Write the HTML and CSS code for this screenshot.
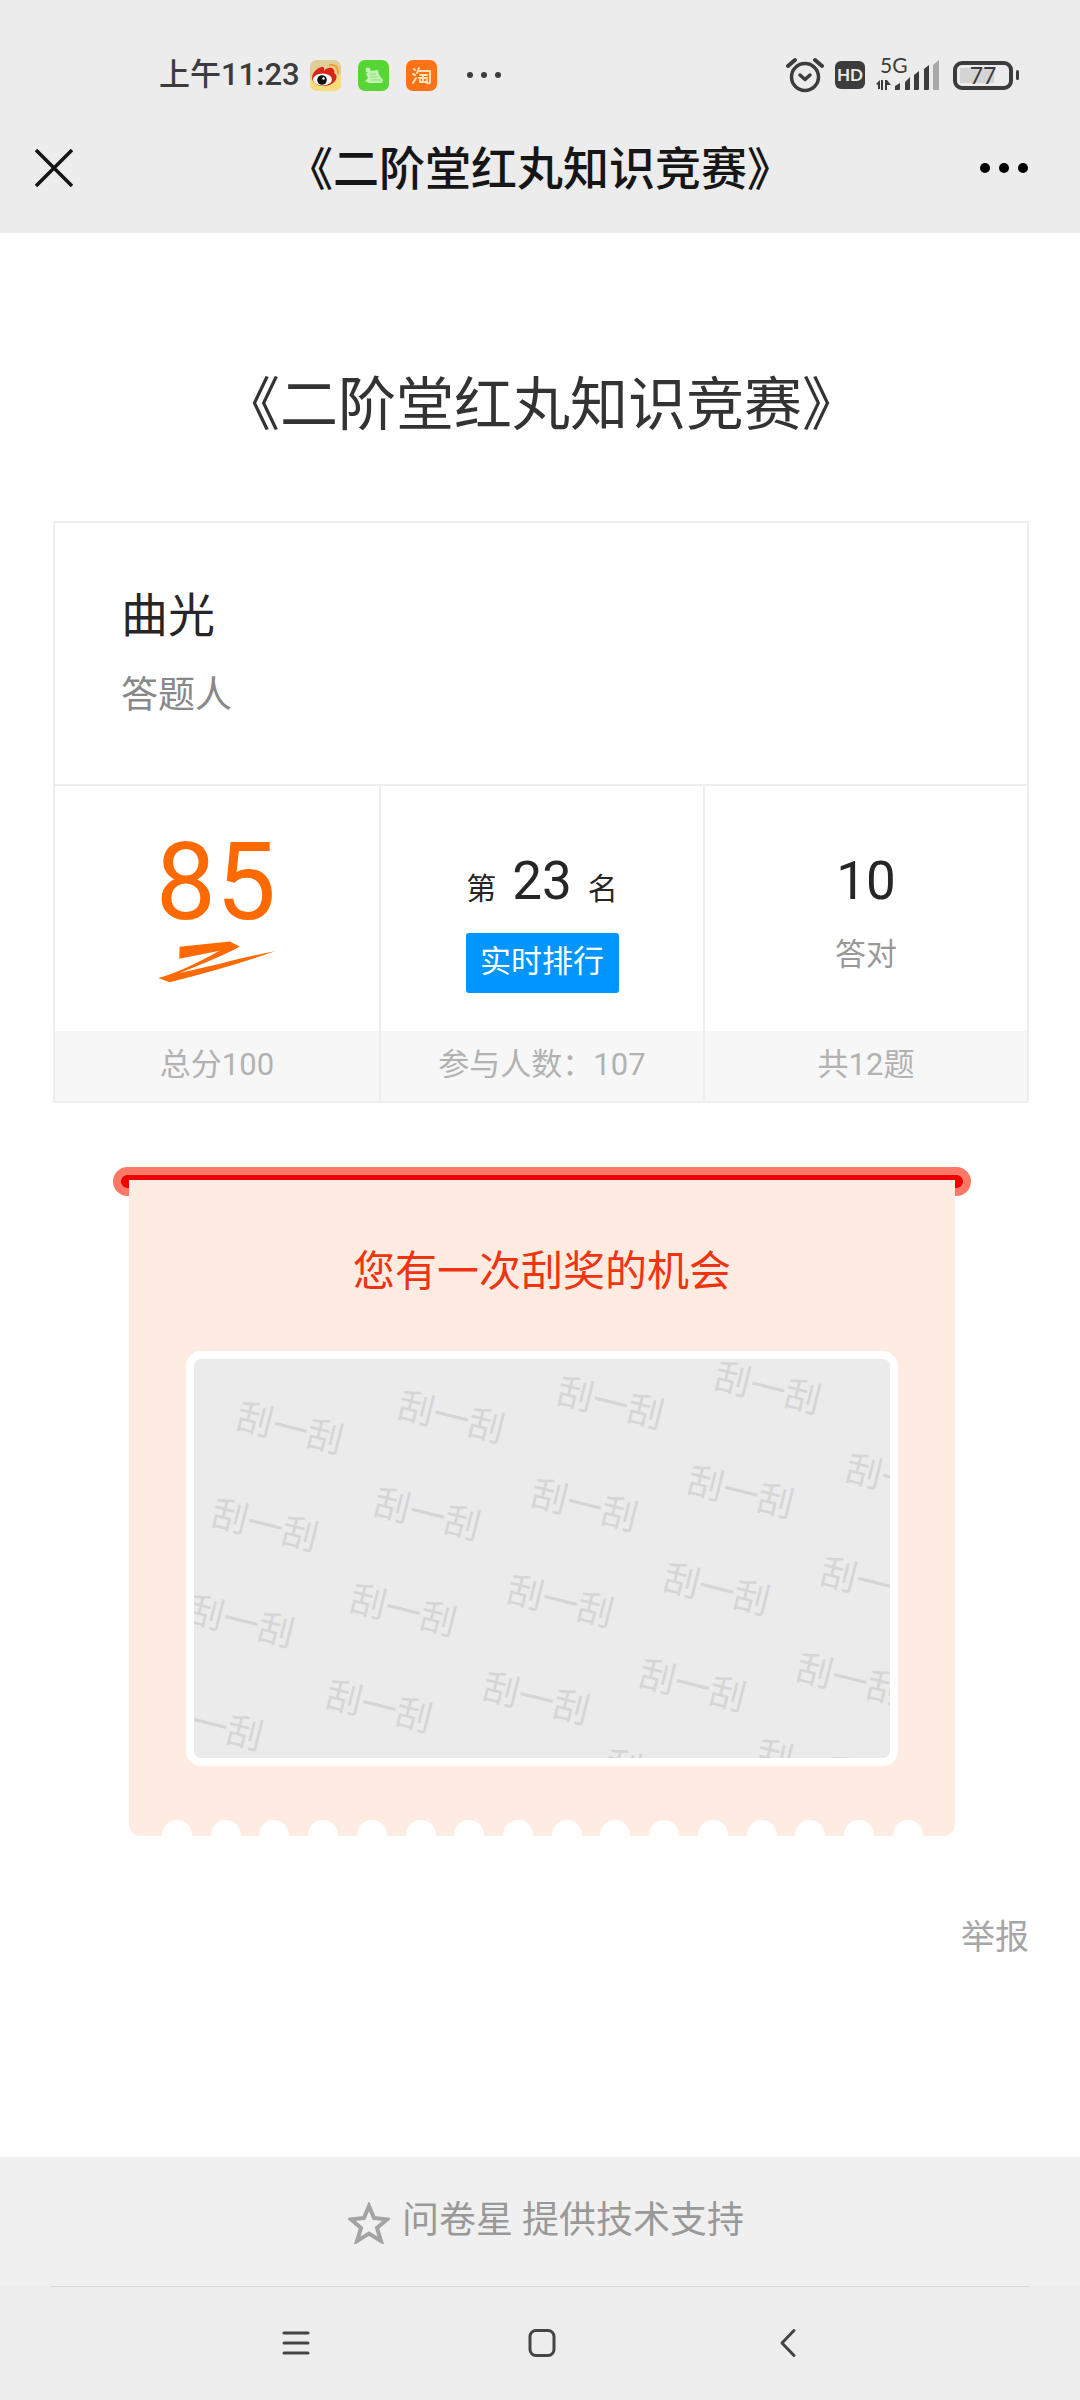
FILE: index.html
```html
<!DOCTYPE html>
<html lang="zh-CN">
<head>
<meta charset="utf-8">
<meta name="viewport" content="width=device-width, initial-scale=1">
<title>《二阶堂红丸知识竞赛》</title>
<link rel="stylesheet" href="styles.css">
</head>
<body>
<header class="top">
  <div class="status">
    <span class="clock">上午11:23</span>
    <div class="apps">
      <svg class="app" viewBox="0 0 31 31" aria-hidden="true">
        <rect width="31" height="31" rx="7" fill="#dfcf96"/>
        <path d="M0 18 Q10 31 31 14 V24 a7 7 0 0 1 -7 7 H7 a7 7 0 0 1 -7 -7z" fill="#f9dc7c"/>
        <path d="M20 5 q8 -1 8 8 M20 9 q4 0 4 4" fill="none" stroke="#f0a030" stroke-width="2" stroke-linecap="round"/>
        <path d="M2 18 C2 12 9 6 13 7 C15 8 14 10 14 11 C18 6 25 7 24 13 C28 15 27 20 23 23 C17 28 3 27 2 18z" fill="#dc2318"/>
        <ellipse cx="12.500" cy="19.500" rx="9.500" ry="6" fill="#fff"/>
        <circle cx="12" cy="20" r="4.800" fill="#111"/>
        <circle cx="13.500" cy="18.500" r="1.200" fill="#fff"/>
      </svg>
      <svg class="app" viewBox="0 0 31 31" aria-hidden="true">
        <rect width="31" height="31" rx="7" fill="#57d534"/>
        <circle cx="10" cy="10" r="2.500" fill="#c9f5b8"/>
        <path d="M8 14 L12 11 L20 10 L21 15 L25 20 L24 23 L11 23 L7 21 L10 18z" fill="#c4f2b4"/>
        <path d="M12 14 h6 M12 17 h8 M13 20 h10" stroke="#8de272" stroke-width="1"/>
      </svg>
      <svg class="app" viewBox="0 0 31 31" aria-hidden="true">
        <rect width="31" height="31" rx="7" fill="#fd7117"/>
        <g fill="none" stroke="#ffe0b8" stroke-width="2" stroke-linecap="round" stroke-linejoin="round">
          <path d="M8 9 l1 1 M7 14 l2 1 M7 23 l3 -5 M13 8 l-2 5 M13 11 h11 v11 q0 2 -3 1 M14 15 h7 M13 18 h8 M17 15 v7 M14 20 v2 h7 v-2"/>
        </g>
      </svg>
    </div>
    <svg class="more-apps" viewBox="0 0 36 8" aria-hidden="true"><g fill="#3c3c3c"><circle cx="4" cy="4" r="3"/><circle cx="18" cy="4" r="3"/><circle cx="32" cy="4" r="3"/></g></svg>
    <div class="signals">
      <svg class="alarm" viewBox="0 0 38 36" aria-hidden="true">
        <g fill="none" stroke="#3c3c3c" stroke-linecap="round" stroke-linejoin="round">
          <circle cx="19" cy="20" r="13.500" stroke-width="3.500"/>
          <path d="M2 9 L9 3 M36 9 L29 3" stroke-width="4"/>
          <path d="M14 18 L19 22.500 L24 18" stroke-width="3.500"/>
        </g>
      </svg>
      <span class="hd">HD</span>
      <div class="cell-signal">
        <span class="gen">5G</span>
        <svg class="bars" viewBox="0 0 64 34" aria-hidden="true">
          <g fill="#3c3c3c">
            <path d="M0 26 L4 22 V31 H2 V27z M5 22 H7 V32 H5z M9 22 H11 V32 H9z M11 22 L15 27 H11z"/>
            <path d="M19 28 L24 25 V31 q0 1 -1 1 H19z M29 24 L34 19 V31 q0 1 -1 1 H29z M38 17 L43 13 V31 q0 1 -1 1 H38z M48 11 L53 7 V31 q0 1 -1 1 H48z"/>
          </g>
          <path d="M57 7 L63 2 V31 q0 1 -1 1 H58 q-1 0 -1 -1z" fill="#a9a9a9"/>
        </svg>
      </div>
      <div class="battery"><span class="level">77</span></div>
    </div>
  </div>
  <div class="titlebar">
    <button class="icon-button" type="button" aria-label="关闭">
      <svg class="close" viewBox="0 0 38 38" aria-hidden="true"><path d="M1 1 L37 37 M37 1 L1 37" stroke="#141414" stroke-width="3.500" fill="none"/></svg>
    </button>
    <span class="bar-title">《二阶堂红丸知识竞赛》</span>
    <button class="icon-button more" type="button" aria-label="更多">
      <svg class="dots" viewBox="0 0 48 10" aria-hidden="true"><circle cx="5" cy="5" r="5"/><circle cx="24" cy="5" r="5"/><circle cx="43" cy="5" r="5"/></svg>
    </button>
  </div>
</header>

<main class="content">
  <h1 class="title">《二阶堂红丸知识竞赛》</h1>

  <section class="result">
    <div class="person">
      <span class="name">曲光</span>
      <span class="role">答题人</span>
    </div>
    <div class="stats">
      <div class="stat">
        <div class="stat-body stat-score">
          <span class="score">85</span>
          <svg class="swoosh" viewBox="350 482 352 126" aria-hidden="true">
            <path d="M415 499 L566 483 L596 498 Q560 520 415 578 L530 552 Q610 530 702 513 Q560 562 385 606 L351 593 Q420 575 535 511 L414 535z" fill="#ff6a00"/>
          </svg>
        </div>
        <span class="stat-foot">总分100</span>
      </div>
      <div class="stat">
        <div class="stat-body">
          <div class="rank"><span class="rank-unit">第</span><span class="number">23</span><span class="rank-unit">名</span></div>
          <a class="rank-link" href="#rank">实时排行</a>
        </div>
        <span class="stat-foot">参与人数：107</span>
      </div>
      <div class="stat">
        <div class="stat-body">
          <span class="number">10</span>
          <span class="caption">答对</span>
        </div>
        <span class="stat-foot">共12题</span>
      </div>
    </div>
  </section>

  <section class="ticket">
    <div class="slot"></div>
    <div class="paper">
      <h2 class="chance">您有一次刮奖的机会</h2>
      <svg class="scratch" viewBox="0 0 695 398" preserveAspectRatio="xMinYMin slice" role="img" aria-label="刮一刮">
        <g class="mark">
          <text transform="translate(96 69) rotate(14)" y="13">刮一刮</text>
          <text transform="translate(257 58) rotate(14)" y="13">刮一刮</text>
          <text transform="translate(416 44) rotate(14)" y="13">刮一刮</text>
          <text transform="translate(573 29) rotate(14)" y="13">刮一刮</text>
          <text transform="translate(71 166) rotate(14)" y="13">刮一刮</text>
          <text transform="translate(233 155) rotate(14)" y="13">刮一刮</text>
          <text transform="translate(390 146) rotate(14)" y="13">刮一刮</text>
          <text transform="translate(546 133) rotate(14)" y="13">刮一刮</text>
          <text transform="translate(704 121) rotate(14)" y="13">刮一刮</text>
          <text transform="translate(47 262) rotate(14)" y="13">刮一刮</text>
          <text transform="translate(209 251) rotate(14)" y="13">刮一刮</text>
          <text transform="translate(366 242) rotate(14)" y="13">刮一刮</text>
          <text transform="translate(522 230) rotate(14)" y="13">刮一刮</text>
          <text transform="translate(679 224) rotate(14)" y="13">刮一刮</text>
          <text transform="translate(16 365) rotate(14)" y="13">刮一刮</text>
          <text transform="translate(185 347) rotate(14)" y="13">刮一刮</text>
          <text transform="translate(342 339) rotate(14)" y="13">刮一刮</text>
          <text transform="translate(498 326) rotate(14)" y="13">刮一刮</text>
          <text transform="translate(655 320) rotate(14)" y="13">刮一刮</text>
          <text transform="translate(464 416) rotate(14)" y="13">刮一刮</text>
          <text transform="translate(615 406) rotate(14)" y="13">刮一刮</text>
        </g>
      </svg>
      <div class="teeth">
        <i></i><i></i><i></i><i></i><i></i><i></i><i></i><i></i><i></i><i></i><i></i><i></i><i></i><i></i><i></i><i></i>
      </div>
    </div>
  </section>

  <a class="report" href="#report">举报</a>
</main>

<footer class="bottom">
  <div class="support">
    <svg class="star" viewBox="0 0 42 42" aria-hidden="true"><path d="M21 4 L26 16 L39 17.500 L29 26 L33 39 L21 31.500 L9 39 L13 26 L3 17.500 L16 16z" fill="none" stroke="#a3a3a3" stroke-width="4" stroke-linejoin="miter"/></svg>
    <span>问卷星 提供技术支持</span>
  </div>
  <nav class="system">
    <button class="icon-button" type="button" aria-label="菜单">
      <svg class="key" viewBox="0 0 30 30" aria-hidden="true"><path d="M3 5 H27 M3 15 H27 M3 25 H27" stroke="#444" stroke-width="3" stroke-linecap="round"/></svg>
    </button>
    <button class="icon-button" type="button" aria-label="主页">
      <svg class="key" viewBox="0 0 30 30" aria-hidden="true"><rect x="3" y="2.500" width="24" height="25" rx="6" fill="none" stroke="#444" stroke-width="3"/></svg>
    </button>
    <button class="icon-button" type="button" aria-label="返回">
      <svg class="key" viewBox="0 0 30 30" aria-hidden="true"><path d="M22 2.500 L10 15 L22 27.500" fill="none" stroke="#444" stroke-width="3" stroke-linecap="round" stroke-linejoin="round"/></svg>
    </button>
  </nav>
</footer>
</body>
</html>
```
FILE: styles.css
```css
* {
  box-sizing: border-box;
}

body {
  margin: 0;
  min-height: 100vh;
  display: flex;
  flex-direction: column;
  background: #fff;
  color: #262626;
  font-family: Roboto, "Noto Sans CJK SC", sans-serif;
}

svg {
  display: block;
}

.icon-button {
  padding: 0;
  border: 0;
  background: none;
}

/* Phone status bar and title bar */
.top {
  background: #ececec;
}

.status {
  display: flex;
  align-items: center;
  height: 102px;
  padding: 48px 61px 0 159px;
}

.clock {
  width: 151px;
  color: #3c3c3c;
  font-size: 31px;
  font-weight: 500;
  line-height: 54px;
  white-space: nowrap;
}

.apps {
  display: flex;
  gap: 17px;
}

.app {
  width: 31px;
  height: 31px;
}

.more-apps {
  width: 36px;
  height: 8px;
  margin-left: 29px;
}

.signals {
  display: flex;
  align-items: center;
  gap: 11px;
  margin-left: auto;
}

.alarm {
  width: 38px;
  height: 36px;
}

.hd {
  width: 30px;
  border-radius: 6px;
  background: #3c3c3c;
  color: #ececec;
  font: 700 17px/28px Lato, sans-serif;
  text-align: center;
}

.cell-signal {
  display: grid;
  width: 64px;
  height: 34px;
}

.gen,
.bars {
  grid-area: 1 / 1;
}

.gen {
  padding-left: 4px;
  color: #3c3c3c;
  font: 21px/14px Lato, sans-serif;
}

.battery {
  display: flex;
  align-items: center;
  margin-left: 2px;
}

.level {
  width: 60px;
  border: 4px solid #3c3c3c;
  border-radius: 9px;
  background: linear-gradient(#d4d4d4, #d4d4d4) 3px center / 34px 15px no-repeat;
  color: #3c3c3c;
  font: 23px/21px Lato, sans-serif;
  text-align: center;
}

.battery::after {
  content: "";
  width: 3px;
  height: 10px;
  margin-left: 3px;
  border-radius: 2px;
  background: #3c3c3c;
}

.titlebar {
  display: grid;
  grid-template-columns: 1fr auto 1fr;
  align-items: center;
  height: 131px;
  padding: 0 35px;
}

.titlebar .icon-button {
  justify-self: start;
}

.titlebar .more {
  justify-self: end;
  margin-right: 17px;
}

.close {
  width: 38px;
  height: 38px;
}

.dots {
  width: 48px;
  height: 10px;
}

.bar-title {
  padding-top: 2px;
  color: #161616;
  font-size: 46px;
  font-weight: 500;
  line-height: 60px;
}

/* Result page */
.content {
  flex: 1;
  display: flex;
  flex-direction: column;
  padding: 132px 51px 60px 53px;
}

.title {
  margin: 0 0 76px;
  color: #333;
  font-size: 58px;
  font-weight: 400;
  line-height: 80px;
  text-align: center;
}

.result {
  border: 2px solid #eee;
}

.person {
  display: flex;
  flex-direction: column;
  gap: 24px;
  padding: 61px 66px 64px;
}

.name {
  font-size: 47px;
  line-height: 64px;
}

.role {
  color: #888;
  font-size: 37px;
  line-height: 48px;
}

.stats {
  display: grid;
  grid-template-columns: repeat(3, 1fr);
  border-top: 2px solid #eee;
}

.stat {
  display: flex;
  flex-direction: column;
  text-align: center;
}

.stat + .stat {
  border-left: 2px solid #eee;
}

.stat-body {
  flex: 1;
  display: flex;
  flex-direction: column;
  align-items: center;
  gap: 22px;
  padding: 65px 0 38px;
}

.stat-score {
  gap: 3px;
  padding: 42px 2px 48px 0;
}

.score {
  color: #ff6a00;
  font-size: 107px;
  line-height: 110px;
}

.swoosh {
  width: 117px;
  height: 42px;
}

.rank {
  display: flex;
  align-items: baseline;
  gap: 16px;
}

.number {
  font-size: 53px;
  line-height: 60px;
}

.rank-unit {
  font-size: 30px;
  line-height: 30px;
}

.rank-link {
  width: 153px;
  height: 60px;
  border-radius: 3px;
  background: #0095ff;
  color: #fff;
  font-size: 31px;
  line-height: 58px;
  text-decoration: none;
}

.caption {
  color: #999;
  font-size: 31px;
  line-height: 44px;
}

.stat-foot {
  padding-bottom: 2px;
  background: #f7f7f7;
  color: #b2b2b2;
  font-size: 31px;
  line-height: 68px;
}

/* Scratch ticket */
.ticket {
  margin: 64px 58px 0 60px;
}

.slot {
  height: 29px;
  border: 8px solid #ff7866;
  border-radius: 15px;
  background: #ee0000;
}

.paper {
  margin: -16px 16px 0;
  padding-top: 62px;
  border-radius: 0 0 12px 12px;
  background: #feece2;
}

.chance {
  margin: 0 0 49px;
  color: #f03311;
  font-size: 42px;
  font-weight: 400;
  line-height: 60px;
  text-align: center;
}

.scratch {
  width: calc(100% - 114px);
  margin: 0 57px;
  border: 8px solid #fff;
  border-radius: 15px;
  background: #ebebeb;
  overflow: hidden;
}

.mark {
  fill: #d6d6d6;
  font-size: 36px;
  text-anchor: middle;
}

.teeth {
  display: flex;
  justify-content: space-between;
  margin-top: 54px;
  padding: 0 32px 0 33px;
}

.teeth i {
  width: 30px;
  height: 16px;
  border-radius: 15px 15px 0 0;
  background: #fff;
}

.report {
  align-self: flex-end;
  margin-top: 76px;
  color: #a6a6a6;
  font-size: 34px;
  line-height: 50px;
  text-decoration: none;
}

/* Footer and system keys */
.support {
  display: flex;
  align-items: center;
  justify-content: center;
  gap: 12px;
  height: 129px;
  padding: 0 0 2px 12px;
  background: #f0f0f0;
  color: #999;
  font-size: 37px;
  line-height: 48px;
}

.star {
  width: 42px;
  height: 42px;
  margin-top: 4px;
}

.system {
  display: flex;
  justify-content: space-between;
  height: 114px;
  padding: 0 278px 0 281px;
  background: linear-gradient(#d8d8d8, #d8d8d8) center top / calc(100% - 100px) 1px no-repeat #ededed;
}

.key {
  width: 30px;
  height: 30px;
}
```
